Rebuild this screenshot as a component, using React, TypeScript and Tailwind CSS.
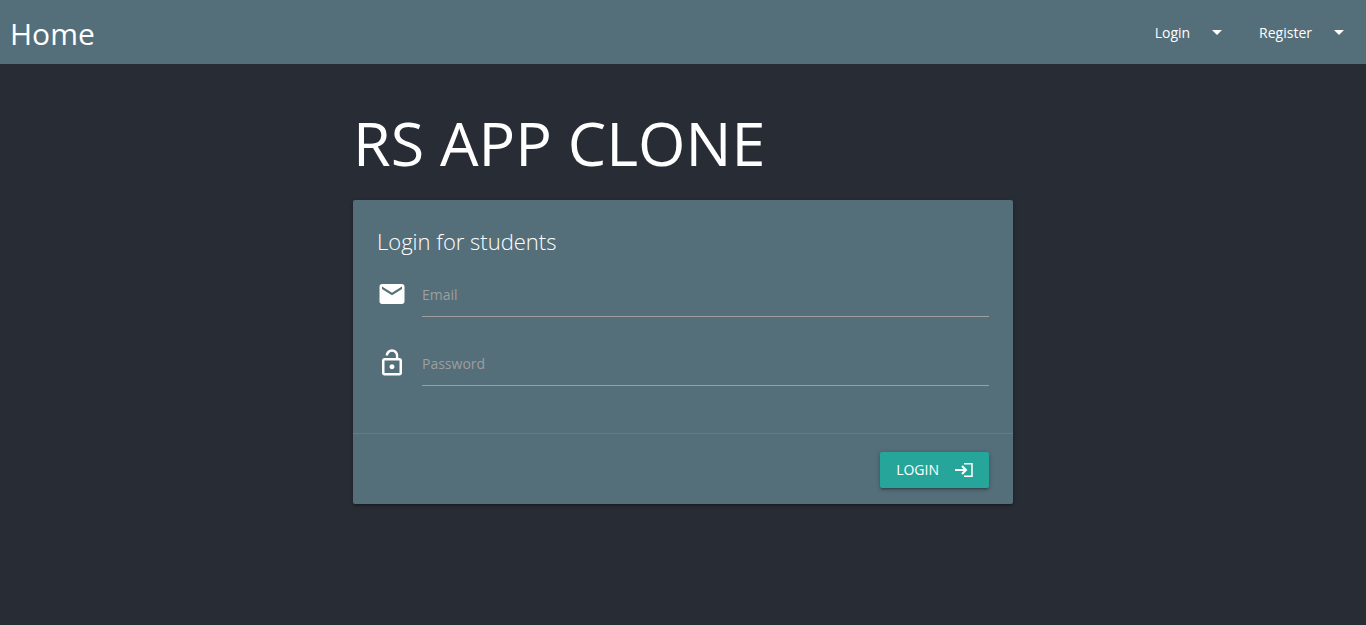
import { useState } from 'react';
import type { ReactNode } from 'react';
import { MdArrowDropDown, MdEmail, MdLockOpen } from 'react-icons/md';

function NavItem({ label }: { label: string }) {
  return (
    <li>
      <button type="button" className="flex h-16 items-center gap-[15px] px-[15px] text-sm">
        <span className="pt-0.5">{label}</span>
        <MdArrowDropDown className="size-6" aria-hidden="true" />
      </button>
    </li>
  );
}

function Field({ id, type, label, icon }: { id: string; type: string; label: string; icon: ReactNode }) {
  const [value, setValue] = useState('');
  return (
    <div className="flex gap-[15px]">
      <div className="flex h-[46px] items-center">{icon}</div>
      <div className="grid flex-1">
        <label htmlFor={id} className={value ? 'hidden' : 'pointer-events-none z-10 col-start-1 row-start-1 pt-[14px] text-sm text-[#9e9e9e]'}>
          {label}
        </label>
        <input
          id={id}
          type={type}
          value={value}
          onChange={(e) => setValue(e.target.value)}
          className="col-start-1 row-start-1 h-[46px] w-full border-b border-[#9e9e9e] bg-transparent text-base outline-none focus:border-[#26a69a]"
        />
      </div>
    </div>
  );
}

function EnterIcon() {
  return (
    <svg viewBox="0 0 20 20" className="size-5" fill="none" stroke="currentColor" aria-hidden="true">
      <path d="M2 10h11M9 6l4 4-4 4" strokeWidth="2" />
      <path d="M11 3.75h8v12.5h-8" strokeWidth="1.5" />
    </svg>
  );
}

export default function App() {
  return (
    <div className="min-h-screen bg-[#282c34] font-['Open_Sans',sans-serif] text-white">
      <nav className="flex h-16 items-center justify-between bg-[#546e7a] pl-[10px]">
        <a href="#home" className="pt-1 text-[30px] leading-[60px]">Home</a>
        <ul className="flex">
          <NavItem label="Login" />
          <NavItem label="Register" />
        </ul>
      </nav>
      <main className="mx-auto w-full max-w-[660px] pt-[41px]">
        <h1 className="text-[61px] leading-[76px]">RS APP CLONE</h1>
        <form className="mt-[19px] rounded-xs bg-[#546e7a] shadow-[0_2px_2px_rgba(0,0,0,0.14),0_3px_1px_-2px_rgba(0,0,0,0.12),0_1px_5px_rgba(0,0,0,0.2)]" onSubmit={(e) => e.preventDefault()}>
          <div className="px-6 pt-6 pb-[47px]">
            <h2 className="text-[22px] leading-[34px] font-light">Login for students</h2>
            <div className="mt-[13px] flex flex-col gap-[23px]">
              <Field id="email" type="email" label="Email" icon={<MdEmail className="size-[30px]" aria-hidden="true" />} />
              <Field id="password" type="password" label="Password" icon={<MdLockOpen className="size-[30px]" aria-hidden="true" />} />
            </div>
          </div>
          <div className="flex justify-end border-t border-[#607d8b] px-6 pt-[18px] pb-4">
            <button type="submit" className="flex h-9 items-center gap-[14px] rounded-xs bg-[#26a69a] px-4 text-sm uppercase shadow-[0_2px_2px_rgba(0,0,0,0.14),0_3px_1px_-2px_rgba(0,0,0,0.12),0_1px_5px_rgba(0,0,0,0.2)]">
              Login
              <EnterIcon />
            </button>
          </div>
        </form>
      </main>
    </div>
  );
}
